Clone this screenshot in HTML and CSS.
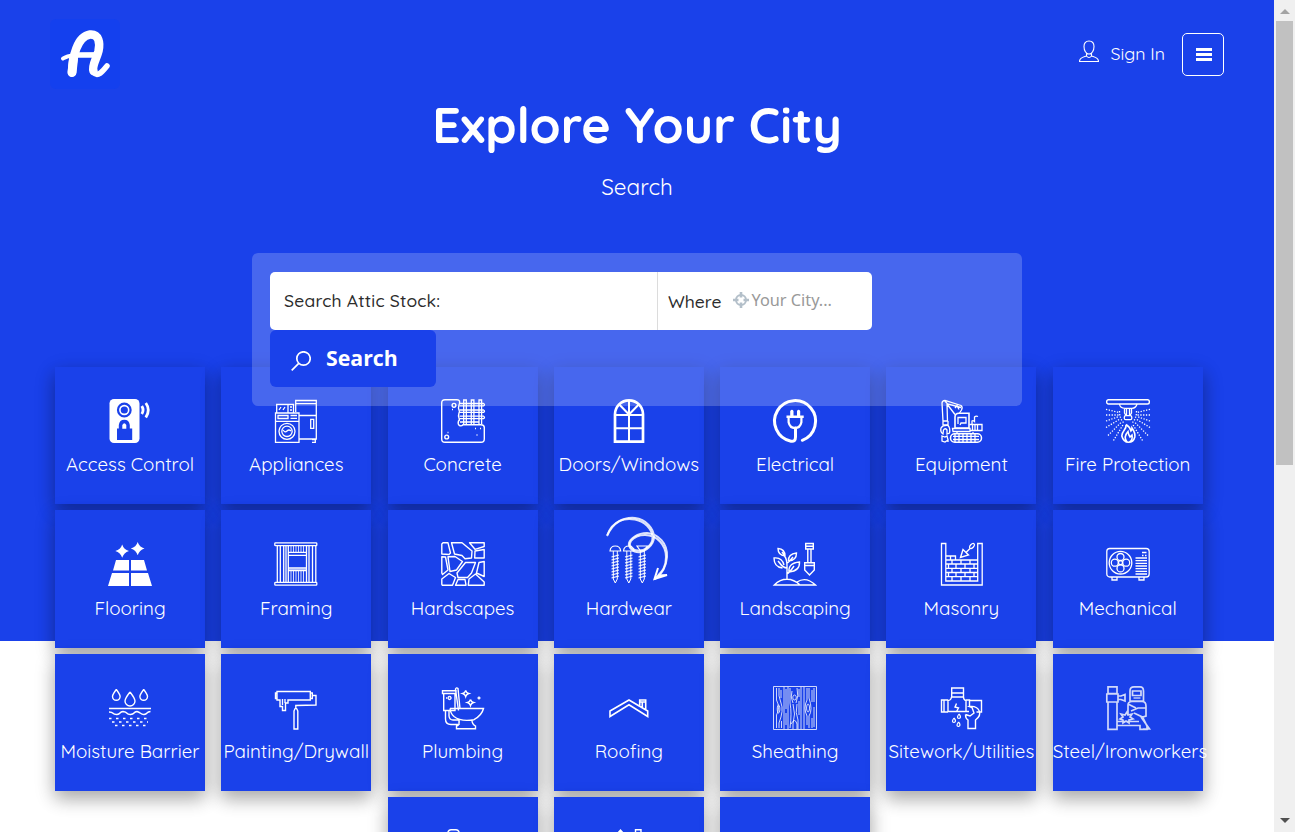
FILE: index.html
```
<!DOCTYPE html>
<html lang="en">
<head>
<meta charset="utf-8">
<title>Explore Your City</title>
<link rel="stylesheet" href="styles.css">
</head>
<body>
<div class="window">
<div class="page">
  <section class="hero">
    <header class="topbar">
      <a class="logo"><svg viewBox="0 0 70 70" width="70" height="70"><g fill="none" stroke="#fff" stroke-linecap="round" stroke-linejoin="round"><path stroke-width="8.500" d="M22 53.500C22.500 38 27 17.500 40 15.500C49 14.800 50.300 24 48.500 32C46.500 40 41.500 47 43.500 52"/><path stroke-width="9" d="M22 53.500L23.500 40"/><path stroke-width="5.500" d="M43.500 53.500C48 58.500 53 52 57 47"/><path stroke-width="4" d="M13 39.500C17 36.500 21 36.500 27 36L46 35.500"/><path stroke-width="5.500" d="M24 36L45 36"/></g></svg></a>
      <nav class="actions">
        <a class="signin"><svg viewBox="0 0 20 23" width="20" height="23" fill="none" stroke="#fff" stroke-width="1.100"><path d="M10 1C6.500 1 5 3.300 5 6.500C5 10.500 7 14 10 14S15 10.500 15 6.500C15 3.300 13.500 1 10 1ZM7.500 13.500V16Q10 19 12.500 16V13.500M7.500 16C4 17.200.5 17.500.5 21.500H19.500C19.500 17.500 16 17.200 12.500 16"/></svg><span>Sign In</span></a>
        <a class="menu"><svg viewBox="0 0 17 13" width="17" height="13" fill="#fff"><path d="M1 0h16v3H1zM1 5h16v3H1zM1 10h16v3H1z"/></svg></a>
      </nav>
    </header>
    <h1>Explore Your City</h1>
    <p class="subtitle">Search</p>
  </section>

  <form class="search">
    <div class="fields">
      <div class="field what">Search Attic Stock:</div>
      <div class="field where"><span>Where</span><svg viewBox="0 0 16 16" width="16" height="16" fill="none" stroke="#b3bfc9"><circle cx="8" cy="8" r="5" stroke-width="2"/><path stroke-width="2.600" d="M8 0v5.500M8 10.500V16M0 8h5.500M10.500 8H16"/></svg><span class="city">Your City...</span></div>
    </div>
    <div class="submit"><svg viewBox="0 0 20 20" width="20" height="20" fill="none" stroke="#fff" stroke-width="1.700"><circle cx="12.500" cy="7.500" r="6.700"/><path d="M7.700 12.300L.7 19.300"/></svg><span>Search</span></div>
  </form>

  <main class="categories">
    <a class="card"><svg class="icon" viewBox="0 0 44 44"><rect x="1.500" width="30" height="44" rx="4.500" fill="#fff" stroke="none"/><circle cx="16.300" cy="11" r="6.300" fill="none" stroke="#1a41ea" stroke-width="2.200"/><circle cx="16.300" cy="11" r="3.600" fill="#1a41ea" stroke="none"/><path fill="#1a41ea" stroke="none" d="M9 29.500h1.800V26q.7-5.300 5.500-5.300T21.800 26v3.500h2.400V41H9z"/><path fill="#fff" stroke="none" d="M14.300 29.700V26q2-3.500 4 0v3.700z"/><path fill="none" stroke="#fff" stroke-width="2.800" d="M33.800 7q2.500 4 0 8M37.800 4q5 7 0 14.500"/></svg><span>Access Control</span></a>

    <a class="card"><svg class="icon" viewBox="0 0 44 44"><path d="M21.700 13V1.500H42.300V40H25M21.700 4.700H42.300M25 16.500H42.300M36.700 20.300h3v9h-3zM38 40.500h3.300v2.800H38M1.500 14H25V43.300H1.500zM1.500 22.300H25M4 16.500H14v3H4zM16.500 16.500H23M16.500 19.300H23M2.700 13.500V5.300H19.500V13.500M14 5.500v8M5 11l2-3M9 11l2-3M16 8h2M16 11h2"/><circle cx="13" cy="32.300" r="8"/><circle cx="13" cy="32.300" r="5.200"/><path d="M9 31q2 3 4 1t4 0"/></svg><span>Appliances</span></a>

    <a class="card"><svg class="icon" viewBox="0 0 44 44"><path stroke-width="1.400" d="M18.500 2Q18 .7 16 .7H4Q.7.7.7 4V40Q.7 43.300 4 43.300H40Q43.300 43.300 43.300 40V28.500Q43.300 25.700 40 25.700H22Q20.500 27.500 18.500 26.500T17.500 22Q19 21 18 19T18 14Q19 13 18 11T18 6Q19 4 18.500 2"/><path d="M22.700 25V1h2.600v24M30.300 25V1h2.600v24M38 25V1h2.600v24M18.500 4.500h24q2 1.200 0 2.400h-24M18.500 11h24q2 1.200 0 2.400h-24M18.500 17.200h24q2 1.200 0 2.400h-24M19 23h19"/><circle cx="13" cy="6.300" r="1.900" stroke-width="1.400"/><circle cx="5.700" cy="38" r="1.900" stroke-width="1.400"/><path d="M11 10.500h1M6.500 33.500h1M34 29.500h1M39 29.500h1M35.500 36h1"/></svg><span>Concrete</span></a>

    <a class="card"><svg class="icon" viewBox="0 0 44 44"><path stroke-width="2.700" d="M8 42.700V15.300a14 14 0 0 1 28 0V42.700z"/><path stroke-width="2" d="M22 1.500V42.500M8 16H36M8 29.300H36M22 15.500L12.500 5.700M22 15.500L31.500 5.700"/></svg><span>Doors/Windows</span></a>

    <a class="card"><svg class="icon" viewBox="0 0 44 44"><path stroke-width="3" stroke-linecap="round" d="M29.300 41.300A20.500 20.500 0 1 0 18 42.200Q22.500 43 22.500 38V29"/><path fill="#fff" fill-rule="evenodd" stroke="none" d="M13.500 16.500H17.200V12Q19 9.500 20.500 12V16.500H24V12Q25.500 9.500 27.200 12V16.500H30.700V19H29.500V23.500Q28 30.300 22 30.300T14.500 23.500V19H13.500zM16.700 19V23Q17.500 27.700 22 27.700T27.300 23V19z"/></svg><span>Electrical</span></a>

    <a class="card"><svg class="icon" viewBox="0 0 44 44"><path d="M3 4Q3 1.500 6 1.500L22 6.500Q24 8 22.500 11L20.500 14M8 5L16 15.500M6 2l2.500 3 13.500 3.500M8.500 5v3M3 4L4 22H8.500L8 5M16 9l2-2.500 2 4M4 22v4h5v-4"/><path d="M4 35Q1 33 2 29Q4 26 9 26.500Q11.500 29 10.500 34L8 35V31Q6 28.500 4.500 31z"/><path stroke-width="1.600" d="M16 29V18Q16 14.300 20 14.300H30V29z"/><path d="M19 25V18.500H27V24H22l-1 2M13.500 29.500H31V32.500H14zM30.500 25.500H43V31.500H30.500M33.500 26v5M36 26v5M38.500 26v5M33 25v-3Q34 21 35.500 22.500V18Q37 16.500 39 17.500M18 33v2M34 33v2"/><rect x="11.500" y="34.700" width="31" height="8.500" rx="4.200" stroke-width="1.500"/><path d="M14 37.300H40M14 40.500H40M16 34v9M20 34v9M24 34v9M28 34v9M32 34v9M36 34v9"/><path d="M3 37l3 1 2-1 1 4-3 2-3-1zM9 40v3"/></svg><span>Equipment</span></a>

    <a class="card"><svg class="icon" viewBox="0 0 44 44"><rect x=".7" y=".8" width="42.600" height="4.200" rx="1.800" stroke-width="1.400"/><path stroke-width="1.300" d="M13.500 5Q14 9.300 19 9.300H26Q30 9.300 31 5M18.500 9.500V14l1.500 2.500M25.500 9.500V14L24 16.500M20.500 10v6M23.500 10v6"/><rect x="18.300" y="16.700" width="7.500" height="4" rx="1.500"/><path stroke-width="1.300" stroke-dasharray="1.300 1.500" d="M0 10.300L13 13.500M0 16H12.500M0 22L13 17.500M0 28.500L14 20M2 36.500L15.500 23M7.500 41.500L17.500 25M44 10.300L31 13.500M44 16H31.500M44 22L31 17.500M44 28.500L30 20M42 36.500L28.500 23M36.500 41.500L26.500 25M13.500 12q0 8 4.500 12M30.500 12q0 8-4.500 12"/><path stroke-width="1.600" d="M20 25.500Q24 28 25 32Q26 31 26 29Q29.500 34 28.800 38Q27.500 43.300 22.500 43.300T15.800 37Q16 34 18 31.500Q20.500 28.500 20 25.500M21 43Q17 38 22 32.500Q22.500 36 24 38L26 36Q27 41 23.500 43"/></svg><span>Fire Protection</span></a>

    <a class="card"><svg class="icon" viewBox="0 0 44 44"><path fill="#fff" stroke="none" d="M5 28.500L8 18H21V28.500zM23 28.500V18H36L39 28.500zM0 44L4 31H21V44zM23 44V31H40L44 44zM14.200 2.500Q15.800 7.700 21 9Q15.800 10.500 14.200 15.800Q12.600 10.500 7.300 9Q12.600 7.700 14.200 2.500M29.700 0Q31.300 5.200 36.500 6.500Q31.300 8 29.700 13.300Q28.100 8 22.800 6.500Q28.100 5.200 29.700 0"/></svg><span>Flooring</span></a>

    <a class="card"><svg class="icon" viewBox="0 0 44 44"><rect x=".8" y=".8" width="42" height="2.900" rx=".7" stroke-width="1.300"/><rect x=".8" y="40.300" width="42" height="2.900" rx=".7" stroke-width="1.300"/><path d="M3.300 4v36M6.300 4v36M9.700 4v36M12 4v36M14.300 4v36M32.500 4v36M35 4v36M38.500 4v36M41.800 4v36M14.300 10.300h18M14.300 13.300h18M14.300 26h18M14.300 28.700h18"/><path stroke-width=".8" d="M17 4v6M19.500 4v6M22 4v6M24.500 4v6M27 4v6M29.500 4v6M17 29v11M19.500 29v11M22 29v11M24.500 29v11M27 29v11M29.500 29v11M14.500 27.300h17.500"/></svg><span>Framing</span></a>

    <a class="card"><svg class="icon" viewBox="0 0 44 44"><path stroke-width="1.400" stroke-linejoin="round" d="M2 .8H7L9.500 11L8 12.500L.8 12V2zM10.500.8H21L31 9L30.500 16L24 16.700L21 13.500L13.500 12zM28.500.8H43.200V4.500L34 7.300zM34 9L43.200 7.500V16H33.700zM.8 14.800L4.500 15L7 28L1.500 32.500L.8 31zM7 14.800L14 14.500L21.500 19.500L15.500 28L9 29.500zM24.500 20.500H34.500L30.500 31L26.500 35.500H17L16 31zM38 20.500L43.200 19.500V34.500L35.500 31zM.8 37L8 31.500L14.500 35.500L11.500 43.200H2Q.8 43.200.8 42zM17 37.500H24L25 43.200H14.500zM27.300 43.200L28 37L34.500 32L43.200 40V43.200z"/></svg><span>Hardscapes</span></a>

    <a class="card"><svg class="icon" viewBox="0 0 44 44"><path stroke-width="1.200" d="M3 9Q3.500 4 8.300 4T13.700 9zM16.500 9Q17 4 21.800 4T27 9zM30 4H40.500L37 9H33.500z"/><path stroke-width="1" d="M6.300 9V37L8.300 41L10.300 37V9M19.800 9V37L21.800 41L23.800 37V9M33.300 9V37L35.300 41L37.300 37V9"/><path stroke-width="1.100" d="M4.500 15l7.500-2M4.500 18l7.500-2M4.500 21l7.500-2M4.500 24l7.500-2M4.500 27l7.500-2M4.500 30l7.500-2M4.500 33l7.500-2M4.500 36l7.500-2M18 15l7.500-2M18 18l7.500-2M18 21l7.500-2M18 24l7.500-2M18 27l7.500-2M18 30l7.500-2M18 33l7.500-2M18 36l7.500-2M31.500 15l7.500-2M31.500 18l7.500-2M31.500 21l7.500-2M31.500 24l7.500-2M31.500 27l7.500-2M31.500 30l7.500-2M31.500 33l7.500-2M31.500 36l7.500-2"/><g stroke-opacity=".85"><path stroke-width="2" d="M0-6C6-20 17-25 28-24S47-13 47-5C47 3 38 10 32 10.200S21 5 22 1S30-9 40-9C51-8 61 1 60 15C59 27 54 33 48 37"/><path stroke-width="2" d="M.3-7C6-22 18-24.500 28-22.500S45-13 45.500-5S38 9 31 8.500S21 3 24-1S32-7 38-7C50-7 59 3 59 15S54 30 48 37"/></g><path stroke-width="2" d="M51 26L47.500 37L60 33L51 33.500"/></svg><span>Hardwear</span></a>

    <a class="card"><svg class="icon" viewBox="0 0 44 44"><path stroke-width="1.400" d="M1.300 43Q7 37.300 14 37.300T27 43zM24 40Q33 34 42.500 43H26M14 37.500V24Q14 17 11.500 14M14 32Q17 30 21 24M14 26Q10 26 6 20M14.500 21Q17 19 20 15M12 14Q5 13 5 6.500Q12 7 12 14M15.500 19Q15 12 23.500 11Q23.500 18.500 15.500 19M9.500 26Q1 25 1 16Q9 15 11 23M16 30Q15 21 26.500 20Q27 29 16 30M12 14L9 10M9 24L5 19"/><path stroke-width="1.400" d="M32.700 1.500H40.300V7H32.700zM32.700 4.300H40.300M34.800 7V20.500M38 7V20.500M31.700 20.700H41.300V28L36.500 33L31.700 28zM31.700 23.500H41.300"/></svg><span>Landscaping</span></a>

    <a class="card"><svg class="icon" viewBox="0 0 44 44"><path stroke-width="1.300" d="M2.500 1.500H6.800V39H38.700V1.500H43.200V43H2.500zM6.800 18H38.700M6.800 22H38.700M6.800 26.300H38.700M6.800 30.500H38.700M6.800 34.700H38.700M6.800 14H16.500V18M11.500 14v4M13 18v4M22 18v4M31 18v4M9.500 22v4M17 22v4M26 22v4M35 22v4M13 26v4.500M22 26v4.500M31 26v4.500M9.500 30.500v4M17 30.500v4M26 30.500v4M35 30.500v4M13 35v4M22 35v4M31 35v4"/><path stroke-width="1.400" d="M21.500 15.500L24 7.500L29.500 13zM27 10.500L31 6.500"/><ellipse cx="33" cy="4" rx="3" ry="1.700" transform="rotate(-45 33 4)"/></svg><span>Masonry</span></a>

    <a class="card"><svg class="icon" viewBox="0 0 44 44"><g stroke-width="1.300"><rect x=".8" y="6.500" width="42.400" height="28.500" rx="3"/><circle cx="14.500" cy="20.700" r="11.300"/><circle cx="14.500" cy="20.700" r="2"/><circle cx="14.500" cy="15" r="3.500"/><circle cx="14.500" cy="26.400" r="3.500"/><circle cx="8.800" cy="20.700" r="3.500"/><circle cx="20.200" cy="20.700" r="3.500"/><path d="M6 35v3h5v-3M33 35v3h5v-3M29.500 16h11.500M29.500 18.700h11.500M29.500 21.300h11.500M29.500 24h11.500M29.500 26.700h11.500M29.500 29.300h11.500M29.500 32h11.500M36 10.500h4.500M36 13.500h1.500M39 13.500h1.500"/></g></svg><span>Mechanical</span></a>

    <a class="card"><svg class="icon" viewBox="0 0 44 44"><path stroke-width="1.400" d="M8.300 3.500Q4.500 8.500 4.500 10.500A3.800 3.800 0 0 0 12.100 10.500Q12.100 8.500 8.300 3.500M35.700 3.500Q31.900 8.500 31.900 10.500A3.800 3.800 0 0 0 39.500 10.500Q39.500 8.500 35.700 3.500M22 6Q17 12.500 17 15A5 5 0 0 0 27 15Q27 12.500 22 6M1 22.500H43M1 26Q4 26 5 27.300T9 28.500Q11 28.300 12 27T15 25.500Q18 26 19 27.300T22.500 28.500Q25 28.300 26 27T29 25.500Q31 26 32.500 27.300T36 28.500Q38 28.300 39 27T42.500 25.500"/><path stroke-width="1.400" stroke-dasharray="2.500 4.500" d="M1 32.500H43M4 36H40M7 39.500H38"/></svg><span>Moisture Barrier</span></a>

    <a class="card"><svg class="icon" viewBox="0 0 44 44"><path stroke-width="1.400" d="M3 5.500H36.300V14H14V17H11.500V24.500H8.500V20.500H6V14H3zM3 7H1.500V12.500H3M36.300 7H38.300V12.500H36.300M38.500 9.500H42V19L21.800 19.500V22.500M20 43V25Q21.800 19.500 23.800 25V43z"/><path d="M8.500 13v6M11 13v4"/></svg><span>Painting/Drywall</span></a>

    <a class="card"><svg class="icon" viewBox="0 0 44 44"><path stroke-width="1.400" d="M1.500 4.800H15V7.500H1.500zM2.700 7.500V24.500H14V7.500M8.500 10.500A1.500 1.500 0 1 0 8.600 10.500M6 12h-1M17.500 24.500L14.500 3Q15.500 1 17 2.500L19 22.500M9 22.500H42.500Q41 29 33 33.700Q20 36 13 30.500Q9.500 27.500 9 22.500M18 34.500V39M4.500 24.500V33Q4.500 38.500 10 38.500H17M8 24.500V30Q8.500 34 12 34H18M18 34Q19 39.500 15.500 40V42.700H34.500V40Q31 38 31 34.500"/><path stroke-width="1.400" d="M24.700 4.500q.7 2.500 3 3-2.300.7-3 3-.7-2.300-3-3 2.300-.5 3-3M29.500 13.500q.7 2.500 3 3-2.300.7-3 3-.7-2.300-3-3 2.300-.5 3-3M38 10.500v3M36.500 12h3"/></svg><span>Plumbing</span></a>

    <a class="card"><svg class="icon" viewBox="0 0 44 44"><path stroke-width="1.600" d="M3 25L22 14L40.700 25V30.500L22 18.800L3 30.500zM32.700 19.500V14H38.700V23.500M32.700 16H38.700M35.300 16V21.500"/></svg><span>Roofing</span></a>

    <a class="card"><svg class="icon thin" viewBox="0 0 44 44"><path d="M.5.5H43.500V43.500H.5zM11 1v42M31 1v42M15 1v42M28 1v42"/><path d="M3.500 2v12q4 8 0 15v13M6 2q-1 8 2 15t-2 20v5M8 4v8M8.500 35v7M13 3v20M13 27v12M17 2v15q2 10 0 25M20 17q-3-6-1-12M23 17q3-7 1-15M20 18q3 10 0 20v5M24 18q-2 9 1 16v9M26 3v8M26 15v14M34 2v12q-4 8 0 16v9M36 2v10q4 12 0 18v12M39 4v12M41 2v14M41 21v20M39 32v10M5.500 19a1.300 4 0 1 0 .1 0M35 18a1.500 4 0 1 0 .1 0M21.500 9a1.700 2.500 0 1 0 .1 0M18 38q4-7 6 0v5"/></svg><span>Sheathing</span></a>

    <a class="card"><svg class="icon" viewBox="0 0 44 44"><path stroke-width="1.400" d="M12.700 2H24.500V7H12.700zM12.700 7V11H24.500V7M12.500 11Q12 14.500 9 14.500V25.500H27V14.500Q24.500 14 24.500 11M2.500 14H5V26H2.500zM5 14H9M5 26H9M27 14H30.500V21M30.500 14.500H42.500V26H37.500M27 25.500H30M17.500 17.500L16 21L19.500 22L17.500 25.500"/><path stroke-width="1.400" d="M26.500 28.500L31 30L35 27L33 21.500L30.500 20.500Q37.500 19.500 40 24.500T36.500 34V42.500H29V34Q26.500 32.500 26.500 28.500"/><path stroke-width="1.200" d="M20 28q-3 4 0 4.500 3-1 0-4.500M15 32q-3 4 0 4.500 3-1 0-4.500M19.500 36q-3 4 0 4.500 3-1 0-4.500"/></svg><span>Sitework/Utilities</span></a>

    <a class="card"><svg class="icon soft" viewBox="0 0 44 44"><path stroke-width="1.700" d="M2 .8H11V7.500H2zM.8 8H12V16H.8zM2 16H11V43.300H2zM12 10H15L19 8.500V15L15 13.500H12M19 10v4M24 15V5Q24 .8 28 .8H34Q37.500.8 37.500 5V15zM26.500 5H35V9.500H26.500zM22 28V19Q22 15.500 26 15.500H36Q40 15.500 40 20V30L36.500 31L28 27M22 18L30 22M40 22H32L25 25M11 35.500H33M11 39.500H34V43.300H41V40L37 32M35 31L43.500 43H37M21 26l1 3 4-1-2 3 3 2-4 1v3l-3-2-3 2v-3l-3-1 3-2-2-3 4 1z"/><path d="M27.500 12h7"/></svg><span>Steel/Ironworkers</span></a>

    <a class="card"><svg class="icon" viewBox="0 0 44 44"><path stroke-width="1.400" d="M6.500 5Q7 .8 10 .8H15Q18 .8 18.500 5V12H6.500z"/></svg></a>
    <a class="card"><svg class="icon" viewBox="0 0 44 44"><path stroke-width="1.400" d="M10 5L13.500 1L17 5M28.500 7V.8H34V7M5 8H40V43H5z"/></svg></a>
    <a class="card"></a>
  </main>
</div>
<div class="scrollbar"><i class="arrow up"></i><i class="thumb"></i><i class="arrow down"></i></div>
</div>
</body>
</html>
```

FILE: styles.css
```
* { box-sizing: border-box; }
body { margin: 0; background: #fff; color: #fff; font-family: Quicksand, Lato, sans-serif; }
svg { display: block; flex: none; }

.window { display: flex; height: 832px; overflow: hidden; }
.page { flex: 1; min-width: 0; height: 832px; overflow: hidden; }

.hero { height: 641px; background: #1a41ea; text-align: center; }
.topbar { display: flex; justify-content: space-between; padding: 19px 50px 0; height: 89px; }
.logo { width: 70px; height: 70px; border-radius: 6px; background: #1440ee; }
.actions { display: flex; padding-top: 14px; }
.signin { display: flex; gap: 12px; height: 43px; font-size: 17.700px; line-height: 40px; margin-right: 17px; }
.signin svg { margin-top: 7px; }
.menu { display: flex; align-items: center; justify-content: center; width: 42px; height: 43px; border: 1px solid #fff; border-radius: 5px; }
h1 { margin: 4px 0 0; font-size: 50px; font-weight: 700; line-height: 63px; }
.subtitle { margin: 16px 0 0; font-size: 22.500px; line-height: 29px; }

.search { position: relative; z-index: 2; width: 770px; height: 153px; margin: -388px 0 0 252px; padding: 19px 18px; border-radius: 6px; background: rgba(255, 255, 255, .2); }
.fields { display: flex; width: 602px; height: 58px; border-radius: 5px; background: #fff; color: #2c2c2c; font-size: 17.500px; font-weight: 500; line-height: 56px; }
.what { width: 388px; padding-left: 14px; border-right: 1px solid #dcdcdc; letter-spacing: .2px; }
.where { display: flex; align-items: center; padding-left: 10px; }
.where svg { margin: -2px 3px 0 11px; }
.where span:first-child { margin-top: -1px; }
.city { margin-top: -2px; color: #999; font: 400 16.300px/58px "Noto Sans", "Open Sans", sans-serif; }
.submit { display: flex; align-items: center; gap: 15px; width: 166px; height: 57px; padding-left: 21px; border-radius: 6px; background: #1a41ea; font: 700 21.300px/55px "Open Sans", "Noto Sans", sans-serif; }
.submit span { margin-top: -2px; }
.submit svg { margin-top: 4px; }

.categories { display: flex; flex-wrap: wrap; justify-content: center; width: 1165px; margin: -39.100px 0 0 46.350px; row-gap: 6px; }
.card { width: 150px; height: 137.430px; margin: 0 8.150px; padding-top: 32px; display: flex; flex-direction: column; align-items: center; background: #1a41ea; box-shadow: 0 8px 16px 0 rgba(0, 0, 0, .2), 0 6px 20px 0 rgba(0, 0, 0, .19); font-size: 18.750px; line-height: 24px; }
.card span { margin-top: 9.400px; min-width: 100%; text-align: center; white-space: nowrap; }
.icon { width: 44px; height: 44px; overflow: visible; fill: none; stroke: #fff; stroke-width: 1.300; }
.icon.thin { stroke-width: .8; }
.icon.soft { opacity: .8; }
.card:nth-child(21) { align-items: flex-start; }
.card:nth-child(21) .icon { align-self: center; }

.scrollbar { display: flex; flex-direction: column; align-items: center; width: 21px; height: 832px; background: #f0f0f0; }
.thumb { width: 17px; height: 444px; margin-top: 7px; background: #c1c1c1; }
.arrow { width: 0; height: 0; border: 5px solid transparent; }
.up { margin-top: 9px; border-top: 0; border-bottom-color: #a3a3a3; }
.down { margin-top: auto; margin-bottom: 9px; border-bottom: 0; border-top-color: #505050; }
```
